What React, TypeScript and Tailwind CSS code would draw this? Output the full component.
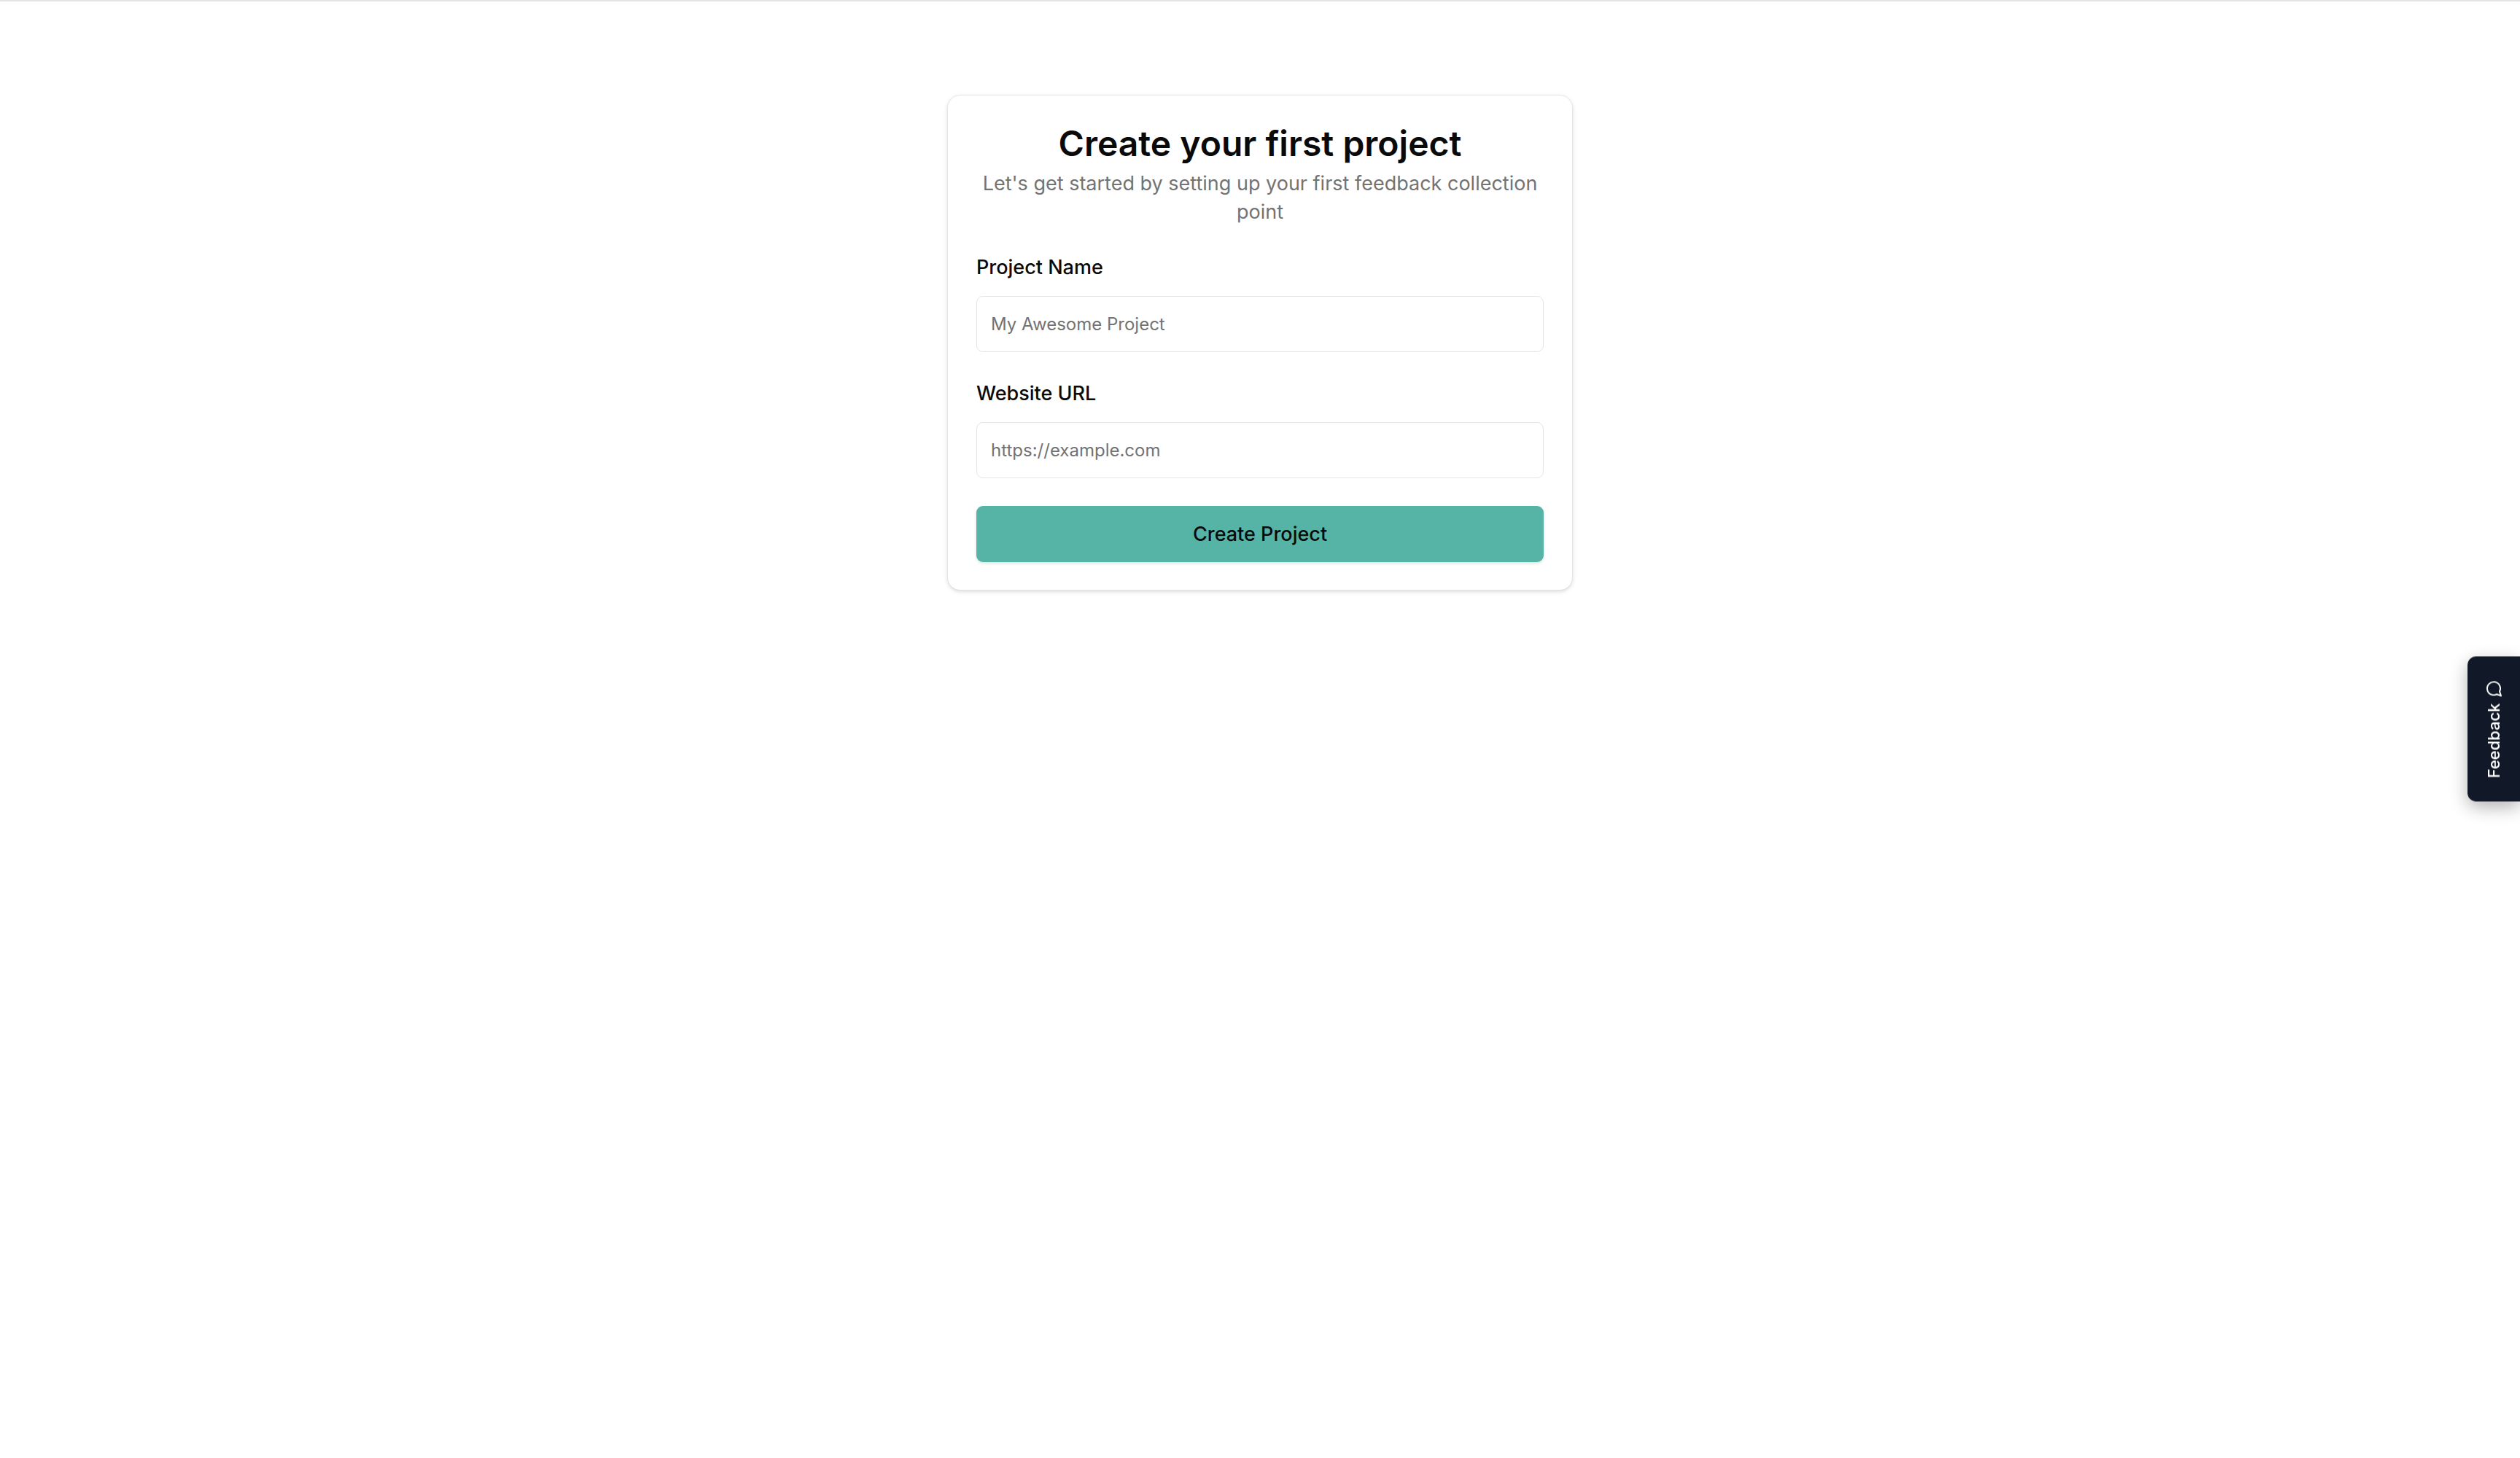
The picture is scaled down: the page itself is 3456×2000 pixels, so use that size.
type FieldProps = {
  id: string;
  label: string;
  type: string;
  placeholder: string;
};

function Field({ id, label, type, placeholder }: FieldProps) {
  return (
    <div className="flex flex-col gap-5">
      <label htmlFor={id} className="text-[27px] leading-[38px] font-medium">
        {label}
      </label>
      <input
        id={id}
        name={id}
        type={type}
        placeholder={placeholder}
        className="h-[77px] w-full rounded-[9px] border border-[#e5e5e5] bg-white px-[19px] text-2xl placeholder:text-[#737373]"
      />
    </div>
  );
}

function FeedbackTab() {
  return (
    <button
      type="button"
      className="fixed top-1/2 right-0 flex -translate-y-1/2 rotate-180 items-center gap-2 rounded-r-xl bg-[#111827] px-8 py-6 text-[22px] leading-6 font-medium text-white shadow-[0_-8px_24px_rgba(0,0,0,0.3)] [writing-mode:vertical-rl]"
    >
      <span>Feedback</span>
      <svg
        viewBox="0 0 24 24"
        className="size-6 rotate-90"
        fill="none"
        stroke="currentColor"
        strokeWidth="2"
        strokeLinecap="round"
        strokeLinejoin="round"
        aria-hidden="true"
      >
        <path d="M7.9 20A9 9 0 1 0 4 16.1L2 22Z" />
      </svg>
    </button>
  );
}

export default function App() {
  return (
    <div className="min-h-screen border-t-2 border-[#e4e4e7] bg-white font-[Inter,sans-serif] text-[#0a0a0a]">
      <main className="flex justify-center px-4 pt-32">
        <section className="flex w-full max-w-[858px] flex-col gap-[38px] rounded-[18px] border border-[#e5e5e5] bg-white px-[39px] py-[38px] shadow-[0_2px_6px_rgba(0,0,0,0.1),0_2px_4px_-2px_rgba(0,0,0,0.1)]">
          <header className="flex flex-col gap-2 text-center">
            <h1 className="text-5xl leading-[55px] font-semibold">Create your first project</h1>
            <p className="text-[27px] leading-[39px] text-[#737373]">
              Let's get started by setting up your first feedback collection point
            </p>
          </header>
          <form className="flex flex-col gap-[38px]">
            <Field id="project-name" label="Project Name" type="text" placeholder="My Awesome Project" />
            <Field id="website-url" label="Website URL" type="url" placeholder="https://example.com" />
            <button
              type="submit"
              className="h-[77px] w-full rounded-[9px] bg-[#56b4a7] text-[27px] leading-[38px] font-medium shadow-[0_2px_4px_rgba(0,0,0,0.12)]"
            >
              Create Project
            </button>
          </form>
        </section>
      </main>
      <FeedbackTab />
    </div>
  );
}
